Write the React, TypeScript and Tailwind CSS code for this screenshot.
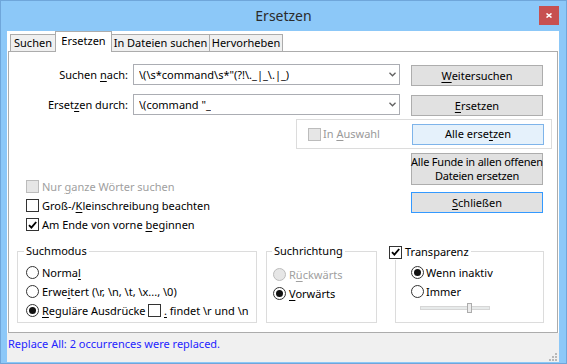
import type { ReactNode } from "react";

function U({ children }: { children: ReactNode }) {
  return <span className="underline decoration-1 underline-offset-[2px]">{children}</span>;
}

function CheckBox({ checked = false, disabled = false }: { checked?: boolean; disabled?: boolean }) {
  return (
    <span
      className={`flex size-[13px] shrink-0 items-center justify-center border ${
        disabled ? "border-[#bcbcbc] bg-[#e6e6e6]" : "border-[#333333] bg-white"
      }`}
    >
      {checked && (
        <svg width="9" height="8" viewBox="0 0 9 8">
          <path d="M1 4.2 L3.4 6.6 L8.2 1" fill="none" stroke="#000" strokeWidth="1.9" />
        </svg>
      )}
    </span>
  );
}

function Radio({ checked = false, disabled = false }: { checked?: boolean; disabled?: boolean }) {
  return (
    <span
      className={`flex size-[13px] shrink-0 items-center justify-center rounded-full border ${
        disabled ? "border-[#bcbcbc] bg-[#e6e6e6]" : "border-[#333333] bg-white"
      }`}
    >
      {checked && <span className="size-[7px] rounded-full bg-[#111]" />}
    </span>
  );
}

function Button({
  children,
  variant = "normal",
  className = "",
}: {
  children: ReactNode;
  variant?: "normal" | "hover" | "default";
  className?: string;
}) {
  const look =
    variant === "hover"
      ? "border-[#7eb4ea] bg-[#e5f1fb]"
      : variant === "default"
      ? "border-[#3399ff] bg-[#e1e1e1]"
      : "border-[#adadad] bg-[#e1e1e1]";
  return (
    <div
      className={`flex w-[132px] shrink-0 items-center justify-center whitespace-nowrap border text-center leading-[14px] ${look} ${className}`}
    >
      {children}
    </div>
  );
}

function Combo({ value }: { value: string }) {
  return (
    <div className="ml-[5px] flex h-[21px] w-[267px] items-center justify-between border border-[#abadb3] bg-white pl-[5px] pr-[3px]">
      <span className="truncate whitespace-pre">{value}</span>
      <svg width="7" height="5" viewBox="0 0 7 5" className="shrink-0">
        <path d="M0.5 0.8 L3.5 3.8 L6.5 0.8" fill="none" stroke="#606060" strokeWidth="1.3" />
      </svg>
    </div>
  );
}

function Tab({ label, width, active = false }: { label: string; width: string; active?: boolean }) {
  if (active) {
    return (
      <div
        className={`relative z-10 -mb-px -ml-px flex h-[21px] items-start justify-center border border-b-0 border-[#acacac] bg-white pt-[1px] ${width}`}
      >
        {label}
      </div>
    );
  }
  return (
    <div
      className={`-ml-px flex h-[17px] items-center justify-center border border-b-0 border-[#acacac] bg-[#f0f0f0] first:ml-0 ${width}`}
    >
      {label}
    </div>
  );
}

export default function App() {
  return (
    <div className="flex h-[364px] w-[567px] flex-col border border-[#6fa6da] bg-[#8cc8f8] font-['Noto_Sans',sans-serif] text-[11px] leading-[16px] text-black">
      {/* title bar */}
      <div className="flex h-[30px] shrink-0">
        <div className="w-[27px]" />
        <div className="flex flex-1 items-center justify-center text-[14px] text-[#2b2b2b]">Ersetzen</div>
        <div className="mr-[7px] mt-[5px] flex h-[19px] w-[20px] items-center justify-center bg-[#c75050]">
          <svg width="6" height="5" viewBox="0 0 6 5">
            <path d="M0.5 0.5 L5.5 4.5 M5.5 0.5 L0.5 4.5" stroke="#fff" strokeWidth="1.6" />
          </svg>
        </div>
      </div>

      {/* client */}
      <div className="ml-[6px] mr-[7px] flex h-[331px] shrink-0 flex-col bg-white">
        {/* tabs */}
        <div className="flex h-[20px] shrink-0 items-end pl-[3px]">
          <Tab label="Suchen" width="w-[46px]" />
          <Tab label="Ersetzen" width="w-[57px]" active />
          <Tab label="In Dateien suchen" width="w-[99px]" />
          <Tab label="Hervorheben" width="w-[74px]" />
        </div>

        {/* panel */}
        <div className="ml-px mr-px flex h-[282px] shrink-0 flex-col border border-[#acacac]">
          {/* row 1 */}
          <div className="mt-[12px] flex items-start">
            <div className="flex h-[21px] w-[119px] items-center justify-end">
              Suchen&nbsp;<U>n</U>ach:
            </div>
            <Combo value={'\\(\\s*command\\s*"(?!\\._|_\\.|_)'} />
            <Button className="ml-[11px] mt-px h-[21px]">
              <U>W</U>eitersuchen
            </Button>
          </div>

          {/* row 2 */}
          <div className="mt-[8px] flex items-start">
            <div className="flex h-[21px] w-[119px] items-center justify-end">
              Erset<U>z</U>en durch:
            </div>
            <Combo value={'\\(command "_'} />
            <Button className="ml-[11px] mt-px h-[21px]">
              <U>E</U>rsetzen
            </Button>
          </div>

          {/* row 3: In Auswahl group */}
          <div className="ml-[287px] mt-[3px] flex h-[30px] w-[256px] items-center border border-[#dcdcdc]">
            <div className="ml-[11px] flex items-center text-[#9a9a9a]">
              <CheckBox disabled />
              <span className="ml-[2px]">
                In <U>A</U>uswahl
              </span>
            </div>
            <Button variant="hover" className="ml-auto mr-[7px] h-[21px]">
              Alle erse<U>t</U>zen
            </Button>
          </div>

          {/* row 4 */}
          <div className="flex">
            <div className="ml-[17px] mt-[28px] flex w-[385px] flex-col">
              <div className="flex h-[19px] items-center text-[#a0a0a0]">
                <CheckBox disabled />
                <span className="ml-[3px]">
                  Nur <U>g</U>anze Wörter suchen
                </span>
              </div>
              <div className="flex h-[19px] items-center">
                <CheckBox />
                <span className="ml-[3px]">
                  Groß-/<U>K</U>leinschreibung beachten
                </span>
              </div>
              <div className="flex h-[19px] items-center">
                <CheckBox checked />
                <span className="ml-[3px]">
                  Am Ende von vorne <U>b</U>eginnen
                </span>
              </div>
            </div>
            <div className="mt-[4px] flex flex-col">
              <Button className="h-[32px] tracking-[-0.2px]">
                Alle Funde in allen offenen
                <br />
                Dateien ersetzen
              </Button>
              <Button variant="default" className="mt-[7px] h-[21px]">
                <U>S</U>chließen
              </Button>
            </div>
          </div>

          {/* row 5: group boxes */}
          <div className="mt-[17px] flex">
            <div className="relative ml-[8px] h-[72px] w-[240px] border border-[#dcdcdc]">
              <span className="absolute -top-[9px] left-[6px] bg-white px-[2px]">Suchmodus</span>
              <div className="flex flex-col pl-[8px] pt-[11px]">
                <div className="flex h-[19px] items-center">
                  <Radio />
                  <span className="ml-[3px]">
                    Norma<U>l</U>
                  </span>
                </div>
                <div className="flex h-[19px] items-center">
                  <Radio />
                  <span className="ml-[3px]">
                    Erwe<U>i</U>tert (\r, \n, \t, \x..., \0)
                  </span>
                </div>
                <div className="flex h-[19px] items-center">
                  <div className="flex w-[122px] items-center">
                    <Radio checked />
                    <span className="ml-[3px]">
                      <U>R</U>eguläre Ausdrücke
                    </span>
                  </div>
                  <CheckBox />
                  <span className="ml-[3px]">
                    <U>.</U> findet \r und \n
                  </span>
                </div>
              </div>
            </div>

            <div className="relative ml-[9px] h-[72px] w-[111px] border border-[#dcdcdc]">
              <span className="absolute -top-[9px] left-[5px] bg-white px-[2px]">Suchrichtung</span>
              <div className="flex flex-col pl-[6px] pt-[13px]">
                <div className="flex h-[19px] items-center text-[#a0a0a0]">
                  <Radio disabled />
                  <span className="ml-[3px]">
                    R<U>ü</U>ckwärts
                  </span>
                </div>
                <div className="flex h-[19px] items-center">
                  <Radio checked />
                  <span className="ml-[3px]">
                    <U>V</U>orwärts
                  </span>
                </div>
              </div>
            </div>

            <div className="relative ml-[18px] h-[72px] w-[149px] border border-[#dcdcdc]">
              <div className="absolute -left-[7px] -top-[8px] flex items-center bg-white pr-[2px]">
                <CheckBox checked />
                <span className="ml-[3px]">Transparenz</span>
              </div>
              <div className="flex flex-col pl-[15px] pt-[11px]">
                <div className="flex h-[19px] items-center">
                  <Radio checked />
                  <span className="ml-[2px]">Wenn inaktiv</span>
                </div>
                <div className="flex h-[19px] items-center">
                  <Radio />
                  <span className="ml-[2px]">Immer</span>
                </div>
                <div className="relative ml-[9px] mt-[2px] h-[10px] w-[70px]">
                  <div className="absolute left-0 right-0 top-[3px] h-[4px] border border-[#d6d6d6] bg-[#e7eaea]" />
                  <div className="absolute left-[47px] top-0 h-[10px] w-[5px] border border-[#acacac] bg-[#ececec]" />
                </div>
              </div>
            </div>
          </div>
        </div>

        {/* status bar */}
        <div className="flex h-[29px] shrink-0 justify-between bg-[#f0f0f0]">
          <div className="pl-px pt-[3px] text-[#2424ff]">Replace All: 2 occurrences were replaced.</div>
          <svg width="8" height="8" viewBox="0 0 8 8" className="mb-px mr-[2px] self-end">
            <g fill="#b8b8b8">
              <rect x="6" y="0" width="2" height="2" />
              <rect x="3" y="3" width="2" height="2" />
              <rect x="6" y="3" width="2" height="2" />
              <rect x="0" y="6" width="2" height="2" />
              <rect x="3" y="6" width="2" height="2" />
              <rect x="6" y="6" width="2" height="2" />
            </g>
          </svg>
        </div>
      </div>
    </div>
  );
}
